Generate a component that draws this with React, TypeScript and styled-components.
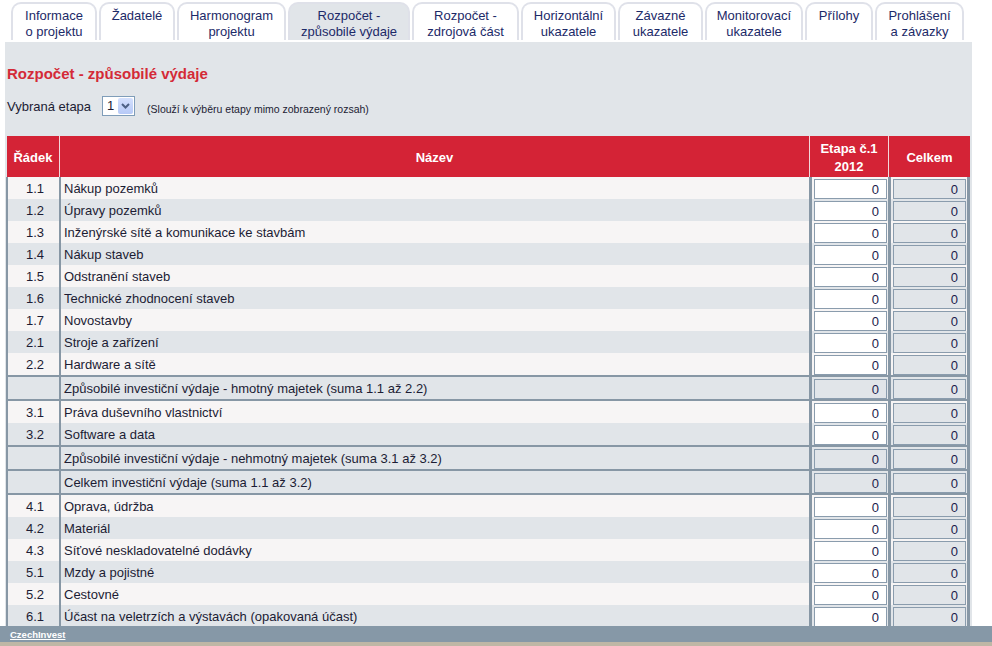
import React from 'react';
import styled, { createGlobalStyle } from 'styled-components';

const GlobalStyle = createGlobalStyle`
  html, body { margin: 0; padding: 0; height: 100%; overflow: hidden; background: #fff; }
  body { font-family: "Liberation Sans", Arial, sans-serif; font-size: 13px; color: #1c1c34; }
  #root { height: 100%; }
`;

const Page = styled.div`
  display: flex;
  flex-direction: column;
  height: 100vh;
`;

const Main = styled.div`
  flex: 1;
  min-height: 0;
  overflow: hidden;
  display: flex;
  flex-direction: column;
  padding: 0 20px 0 5px;
`;

const TabBar = styled.div`
  display: flex;
  gap: 2px;
  padding: 2px 0 0 6px;
  margin-bottom: 2px;
`;

const Tab = styled.div<{ $w: number; $active?: boolean }>`
  box-sizing: border-box;
  width: ${p => p.$w}px;
  height: 38px;
  border: 2px solid #dfe1e9;
  border-bottom: none;
  border-radius: 10px 10px 0 0;
  background: ${p => (p.$active ? '#e1e5e9' : '#ffffff')};
  color: #1c2a68;
  text-align: center;
  font-size: 13px;
  line-height: 16px;
  padding-top: 4px;
  white-space: nowrap;
`;

const Panel = styled.div`
  flex: 1;
  min-height: 0;
  background: #e1e5e9;
  padding: 23px 2px 0 1px;
`;

const Title = styled.h1`
  margin: 0;
  padding-left: 1px;
  font-size: 15px;
  line-height: 18px;
  font-weight: bold;
  color: #d42a37;
`;

const FilterRow = styled.div`
  display: flex;
  align-items: center;
  margin-top: 12px;
  height: 21px;
  padding-left: 1px;
`;

const FilterLabel = styled.span`
  font-size: 13px;
  margin: 2px 11px 0 0;
`;

const FakeSelect = styled.div`
  box-sizing: border-box;
  display: flex;
  align-items: center;
  width: 33px;
  height: 20px;
  border: 1px solid #7f9db9;
  background: #fff;
`;

const SelectValue = styled.span`
  flex: 1;
  padding: 1px 0 0 4px;
  font-size: 13px;
  line-height: 16px;
`;

const SelectButton = styled.span`
  box-sizing: border-box;
  align-self: stretch;
  width: 15px;
  margin: 1px;
  border-radius: 2px;
  background: linear-gradient(#d4e0fd, #b6c9f7);
  display: flex;
  align-items: center;
  justify-content: center;
`;

const Hint = styled.span`
  font-size: 10.5px;
  margin: 6px 0 0 12px;
`;

const Table = styled.table`
  margin-top: 20px;
  width: 964px;
  table-layout: fixed;
  border-collapse: separate;
  border-spacing: 0;
`;

const HeadCell = styled.th<{ $w: number; $first?: boolean }>`
  box-sizing: border-box;
  width: ${p => p.$w}px;
  height: 41px;
  padding: 2px 0 0 0;
  background: #d42336;
  color: #fff;
  font-size: 13px;
  font-weight: bold;
  line-height: 18px;
  text-align: center;
  vertical-align: middle;
  border-left: 1px solid ${p => (p.$first ? '#e1e5e9' : '#f3d7da')};
`;

const Row = styled.tr<{ $shade: boolean; $rule?: boolean }>`
  background: ${p => (p.$shade ? '#e1e5e9' : '#f7f5f5')};
  & > td {
    border-top: ${p => (p.$rule ? '2px solid #8797a5' : 'none')};
  }
`;

const Cell = styled.td<{ $line: number; $right?: boolean; $align?: string; $text?: boolean }>`
  box-sizing: content-box;
  height: ${p => (p.$text ? 20 : 22)}px;
  padding: ${p => (p.$text ? '2px 0 0 3px' : '0 1px 0 2px')};
  border-left: ${p => p.$line}px solid #8797a5;
  border-right: ${p => (p.$right ? '3px solid #8797a5' : 'none')};
  text-align: ${p => p.$align || 'left'};
  vertical-align: middle;
  font-size: 13px;
  line-height: 16px;
  white-space: nowrap;
`;

const Amount = styled.input<{ $editable: boolean }>`
  box-sizing: border-box;
  display: block;
  width: 73px;
  height: 20px;
  margin: 1px 0 0 0;
  padding: 1px 7px 0 0;
  border: 1px solid #8a9cad;
  background: ${p => (p.$editable ? '#ffffff' : '#e1e5e9')};
  text-align: right;
  font-family: "Liberation Sans", Arial, sans-serif;
  font-size: 13px;
  color: #1c1c4c;
  outline: none;
`;

const Footer = styled.div`
  height: 16px;
  background: #8698a7;
  border-bottom: 4px solid #bfb7a6;
  display: flex;
  align-items: center;
  padding-left: 10px;
`;

const FooterLink = styled.a`
  color: #fff;
  font-size: 9.5px;
  font-weight: bold;
  text-decoration: underline;
`;

const tabs = [
  { w: 86, label: ['Informace', 'o projektu'] },
  { w: 76, label: ['Žadatelé'] },
  { w: 109, label: ['Harmonogram', 'projektu'] },
  { w: 122, label: ['Rozpočet -', 'způsobilé výdaje'], active: true },
  { w: 107, label: ['Rozpočet -', 'zdrojová část'] },
  { w: 95, label: ['Horizontální', 'ukazatele'] },
  { w: 85, label: ['Závazné', 'ukazatele'] },
  { w: 98, label: ['Monitorovací', 'ukazatele'] },
  { w: 68, label: ['Přílohy'] },
  { w: 89, label: ['Prohlášení', 'a závazky'] },
];

type Item = { code: string; name: string; sum?: boolean; rule?: boolean };

const rows: Item[] = [
  { code: '1.1', name: 'Nákup pozemků' },
  { code: '1.2', name: 'Úpravy pozemků' },
  { code: '1.3', name: 'Inženýrské sítě a komunikace ke stavbám' },
  { code: '1.4', name: 'Nákup staveb' },
  { code: '1.5', name: 'Odstranění staveb' },
  { code: '1.6', name: 'Technické zhodnocení staveb' },
  { code: '1.7', name: 'Novostavby' },
  { code: '2.1', name: 'Stroje a zařízení' },
  { code: '2.2', name: 'Hardware a sítě' },
  { code: '', name: 'Způsobilé investiční výdaje - hmotný majetek (suma 1.1 až 2.2)', sum: true, rule: true },
  { code: '3.1', name: 'Práva duševního vlastnictví', rule: true },
  { code: '3.2', name: 'Software a data' },
  { code: '', name: 'Způsobilé investiční výdaje - nehmotný majetek (suma 3.1 až 3.2)', sum: true, rule: true },
  { code: '', name: 'Celkem investiční výdaje (suma 1.1 až 3.2)', sum: true, rule: true },
  { code: '4.1', name: 'Oprava, údržba', rule: true },
  { code: '4.2', name: 'Materiál' },
  { code: '4.3', name: 'Síťové neskladovatelné dodávky' },
  { code: '5.1', name: 'Mzdy a pojistné' },
  { code: '5.2', name: 'Cestovné' },
  { code: '6.1', name: 'Účast na veletrzích a výstavách (opakovaná účast)' },
];

export default function App() {
  return (
    <Page>
      <GlobalStyle />
      <Main>
        <TabBar>
          {tabs.map((t, i) => (
            <Tab key={i} $w={t.w} $active={t.active}>
              {t.label.map((l, j) => (
                <div key={j}>{l}</div>
              ))}
            </Tab>
          ))}
        </TabBar>
        <Panel>
          <Title>Rozpočet - způsobilé výdaje</Title>
          <FilterRow>
            <FilterLabel>Vybraná etapa</FilterLabel>
            <FakeSelect>
              <SelectValue>1</SelectValue>
              <SelectButton>
                <svg width="9" height="6" viewBox="0 0 9 6">
                  <path d="M1 1 L4.5 4.5 L8 1" fill="none" stroke="#4d6185" strokeWidth="2" />
                </svg>
              </SelectButton>
            </FakeSelect>
            <Hint>(Slouží k výběru etapy mimo zobrazený rozsah)</Hint>
          </FilterRow>
          <Table>
            <thead>
              <tr>
                <HeadCell $w={53} $first>Řádek</HeadCell>
                <HeadCell $w={750}>Název</HeadCell>
                <HeadCell $w={79}>
                  Etapa č.1
                  <br />
                  2012
                </HeadCell>
                <HeadCell $w={82}>Celkem</HeadCell>
              </tr>
            </thead>
            <tbody>
              {rows.map((r, i) => (
                <Row key={i} $shade={!!r.sum || i % 2 === 1} $rule={r.rule}>
                  <Cell $line={2} $align="center" $text>{r.code}</Cell>
                  <Cell $line={2} $text>{r.name}</Cell>
                  <Cell $line={3}>
                    <Amount $editable={!r.sum} defaultValue="0" readOnly={r.sum} />
                  </Cell>
                  <Cell $line={3} $right>
                    <Amount $editable={false} defaultValue="0" readOnly />
                  </Cell>
                </Row>
              ))}
            </tbody>
          </Table>
        </Panel>
      </Main>
      <Footer>
        <FooterLink href="#">CzechInvest</FooterLink>
      </Footer>
    </Page>
  );
}
